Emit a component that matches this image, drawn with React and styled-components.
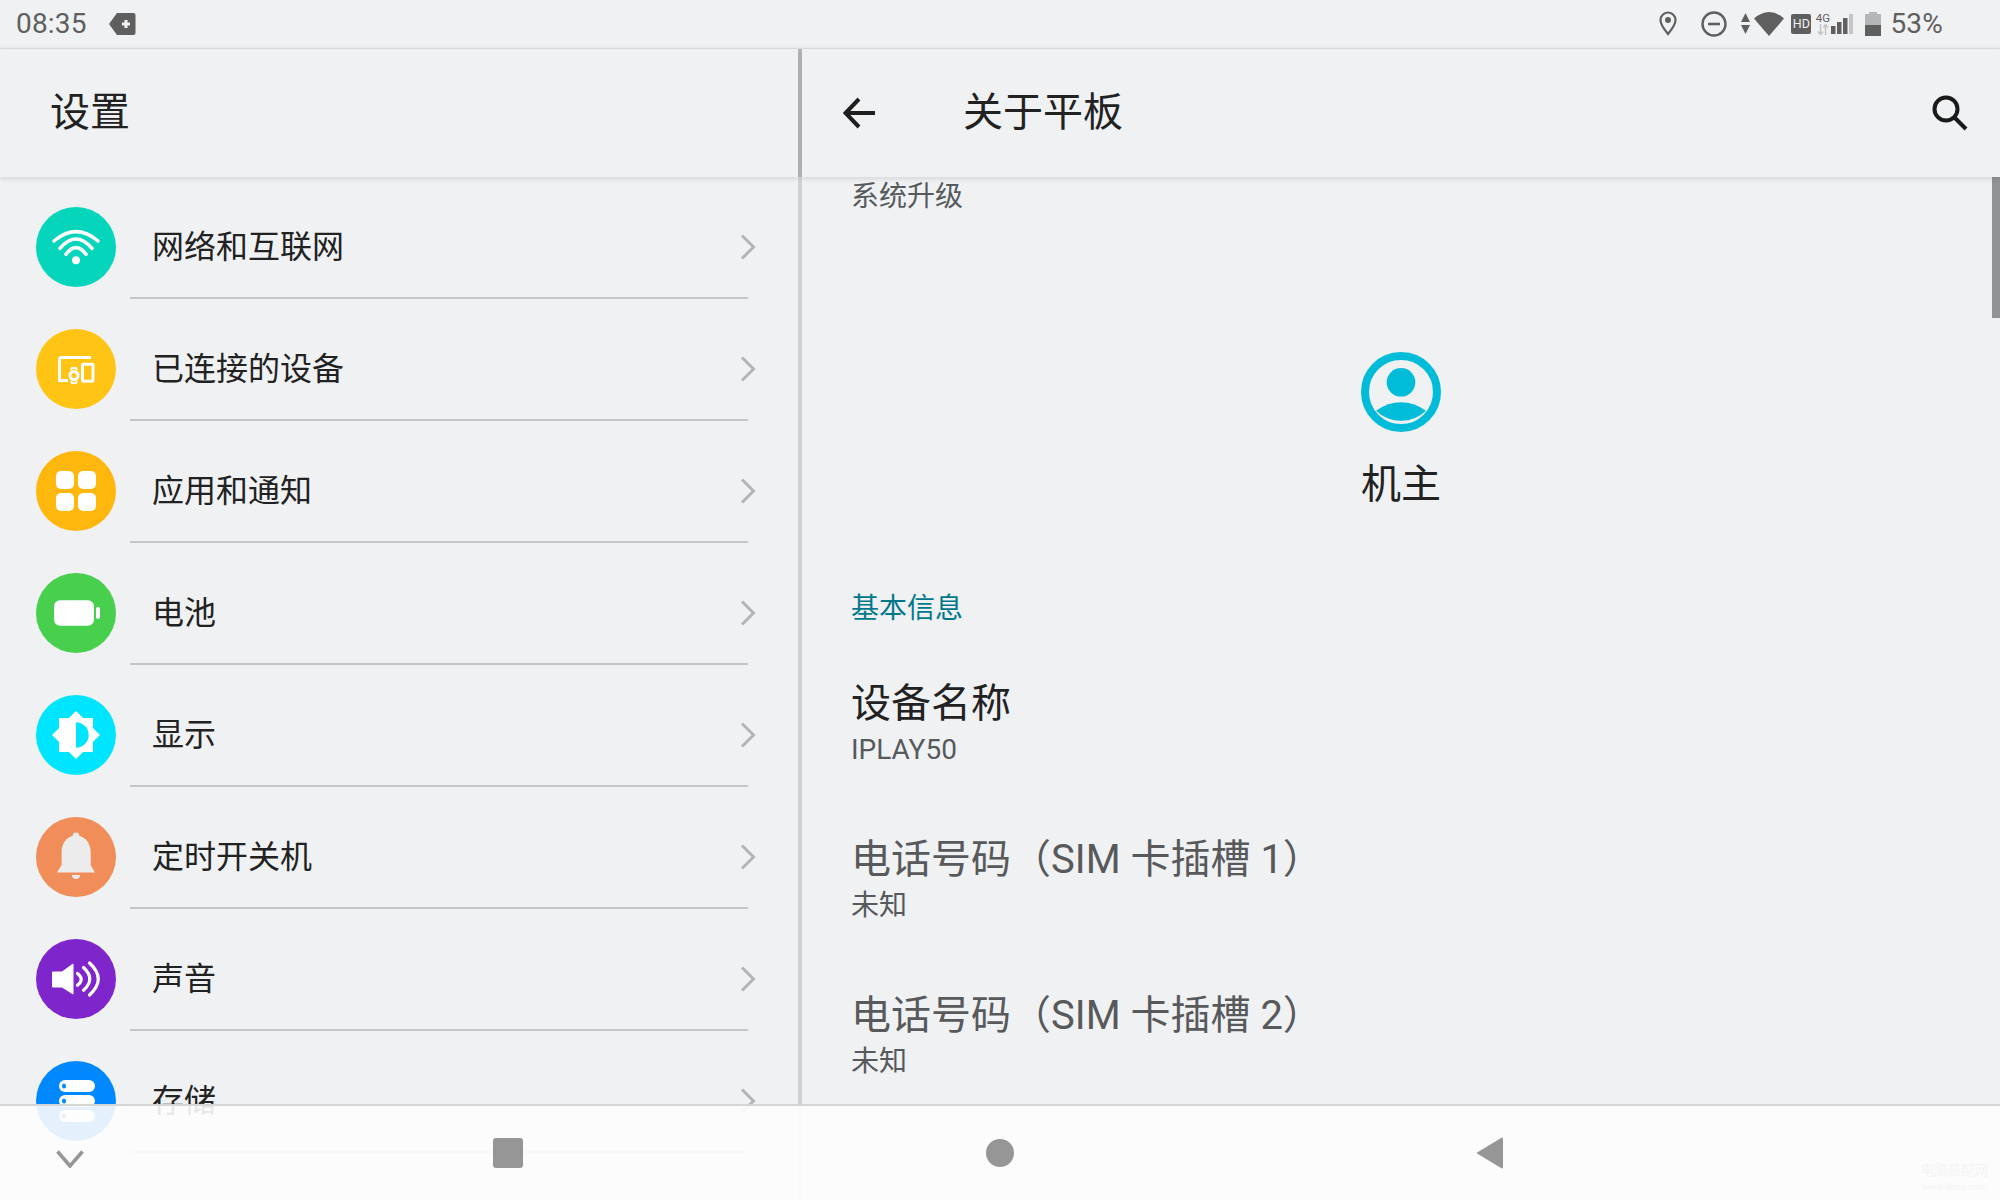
import React from 'react';
import styled, { createGlobalStyle } from 'styled-components';

const FONT = `Roboto, "Noto Sans CJK SC", "Noto Sans", sans-serif`;
const BG = '#f0f1f3';
const GRAY = '#5f5f5f';

const Global = createGlobalStyle`
  html, body { margin: 0; padding: 0; background: ${BG}; }
  * { box-sizing: border-box; }
`;

const Screen = styled.div`
  position: relative;
  width: 2000px;
  height: 1200px;
  overflow: hidden;
  display: flex;
  flex-direction: column;
  background: ${BG};
  font-family: ${FONT};
  color: #222;
`;

const StatusBar = styled.div`
  flex: 0 0 48px;
  display: flex;
  align-items: center;
  padding: 0 57px 1px 16px;
  border-bottom: 1px solid #dcdde0;
  background: linear-gradient(${BG} 90%, #e9eaec);
`;
const StatusText = styled.span`
  font-size: 28px;
  line-height: 47px;
  color: ${GRAY};
  margin-left: ${p => p.$ml || 0}px;
  letter-spacing: 0.2px;
`;
const Spacer = styled.div`
  flex: 1;
`;
const Glyph = styled.svg`
  flex: none;
  display: block;
  margin-left: ${p => p.$ml || 0}px;
`;
const HdBadge = styled.span`
  flex: none;
  width: 20px;
  height: 20px;
  margin-left: 7px;
  border-radius: 2px;
  background: ${GRAY};
  color: #f0f1f3;
  font-size: 12.5px;
  line-height: 20px;
  text-align: center;
`;
const NetType = styled.span`
  flex: none;
  width: 15px;
  height: 24px;
  margin-left: 4px;
  display: flex;
  flex-direction: column;
  align-items: center;
  font-size: 11.5px;
  line-height: 12px;
  color: ${GRAY};
`;

const Main = styled.div`
  flex: 1;
  min-height: 0;
  display: flex;
`;
const Pane = styled.section`
  position: relative;
  min-width: 0;
  display: flex;
  flex-direction: column;
  flex: ${p => (p.$side === 'left' ? '0 0 798px' : '1')};
`;
const PaneDivider = styled.div`
  flex: 0 0 4px;
  background: linear-gradient(#b9babc 128px, #d0d1d3 128px);
`;
const Header = styled.header`
  position: relative;
  z-index: 1;
  flex: 0 0 128px;
  display: flex;
  align-items: center;
  padding: 0 32px 0 ${p => p.$pad}px;
  background: ${BG};
  box-shadow: 0 2px 5px rgba(0, 0, 0, 0.11);
`;
const HeaderTitle = styled.h1`
  margin: 0 0 0 ${p => p.$ml || 0}px;
  flex: 1;
  font-size: 40px;
  line-height: 56px;
  font-weight: 400;
  color: #222;
`;

const SettingsList = styled.div`
  flex: 1;
  min-height: 0;
  overflow: hidden;
`;
const Row = styled.div`
  height: 122px;
  padding: 20px 42px 2px 36px;
  display: flex;
  align-items: center;
  background: linear-gradient(#c5c6c8, #c5c6c8) no-repeat 130px bottom / 618px 2px;
`;
const IconDisc = styled.div`
  flex: 0 0 80px;
  height: 80px;
  border-radius: 50%;
  background: ${p => p.$color};
`;
const DiscArt = styled.svg`
  display: block;
  width: 80px;
  height: 80px;
`;
const RowLabel = styled.span`
  flex: 1;
  margin-left: 36px;
  font-size: 32px;
  line-height: 44px;
  color: #222;
`;

const Detail = styled.div`
  flex: 1;
  min-height: 0;
  overflow: hidden;
  padding-left: 49px;
`;
const Caption = styled.div`
  font-size: 28px;
  line-height: 40px;
  color: ${p => p.$color || '#565a5c'};
  margin-top: ${p => p.$mt || 0}px;
`;
const Owner = styled.div`
  margin: 135px 49px 0 0;
  display: flex;
  flex-direction: column;
  align-items: center;
`;
const OwnerName = styled.div`
  margin-top: 25px;
  font-size: 40px;
  line-height: 56px;
  color: #222;
`;
const Pref = styled.div`
  height: 92px;
  margin-top: ${p => p.$mt}px;
`;
const PrefTitle = styled.div`
  font-size: 40px;
  line-height: 56px;
  color: ${p => (p.$muted ? '#58595b' : '#222')};
`;
const PrefValue = styled.div`
  font-size: 28px;
  line-height: 36px;
  color: #565a5c;
`;
const ScrollThumb = styled.div`
  position: absolute;
  top: 23px;
  right: 0;
  width: 8px;
  height: 246px;
  background: #909497;
`;

const NavBar = styled.nav`
  position: absolute;
  left: 0;
  right: 0;
  bottom: 0;
  z-index: 2;
  height: 96px;
  display: grid;
  grid-template-columns: 493px 30px 1fr 28px 1fr 28px 496px;
  align-items: center;
  border-top: 2px solid #d4d5d7;
  background: rgba(253, 253, 253, 0.9);
`;
const NavSquare = styled.div`
  grid-column: 2;
  width: 30px;
  height: 30px;
  border-radius: 3px;
  background: #969696;
`;
const NavCircle = styled.div`
  grid-column: 4;
  width: 28px;
  height: 28px;
  border-radius: 50%;
  background: #969696;
`;
const Watermark = styled.div`
  position: absolute;
  right: 11px;
  bottom: 7px;
  width: 69px;
  text-align: center;
  color: #f4f4f4;
  font-size: 13.5px;
  line-height: 17px;
`;
const WatermarkUrl = styled.div`
  font-size: 9.5px;
  line-height: 12px;
  margin-top: 2px;
`;

const W = '#fff';
const lineProps = { fill: 'none', stroke: W, strokeLinecap: 'round', strokeLinejoin: 'round' };

const Art = {
  wifi: (
    <g {...lineProps} strokeWidth="3.6">
      <path d="M18 34Q40 15.4 62 34" />
      <path d="M24 41.3Q40 22.7 56 41.3" />
      <path d="M30 47.3Q40 34 50 47.3" />
      <circle cx="40" cy="53.3" r="4" fill={W} stroke="none" />
    </g>
  ),
  devices: (
    <g fill="none" stroke={W} strokeWidth="3">
      <path d="M55 28.5H25.5a2 2 0 0 0-2 2V51.5H32" />
      <circle cx="38" cy="46.5" r="4" />
      <path d="M35 41l1-2h4l1 2M35 52l1 2h4l1-2" strokeWidth="2" />
      <rect x="46.500" y="35.200" width="10.500" height="17" rx="1" />
    </g>
  ),
  apps: (
    <g fill={W}>
      <rect x="20" y="20" width="18" height="18" rx="5" />
      <rect x="42" y="20" width="18" height="18" rx="5" />
      <rect x="20" y="42" width="18" height="18" rx="5" />
      <rect x="42" y="42" width="18" height="18" rx="5" />
    </g>
  ),
  battery: (
    <g fill={W}>
      <rect x="18" y="27.300" width="40" height="25.400" rx="6" />
      <rect x="60" y="34" width="4" height="12" rx="2" />
    </g>
  ),
  display: (
    <path
      transform="translate(40 40) scale(2.12) translate(-12 -12)"
      fill={W}
      fillRule="evenodd"
      d="M20 8.69V4h-4.690L12 .69 8.690 4H4v4.690L.69 12 4 15.310V20h4.690L12 23.310 15.310 20H20v-4.690L23.310 12 20 8.690zM12 18V6c3.310 0 6 2.690 6 6s-2.690 6-6 6z"
    />
  ),
  bell: (
    <g fill="#ececec">
      <path d="M40 15.500a3.200 3.200 0 0 1 3.200 3.200C50 20.500 54.700 27 54.700 35V48L59 55.600H21L25.600 48V35C25.600 27 30 20.500 36.800 18.700A3.200 3.200 0 0 1 40 15.500z" />
      <path d="M36 58h8a4 4 0 0 1-8 0z" />
    </g>
  ),
  sound: (
    <g>
      <path fill={W} stroke={W} strokeWidth="1" strokeLinejoin="round" d="M16.500 33H26L37 25V55L26 48H16.500z" />
      <g {...lineProps} strokeWidth="3.200">
        <path d="M41.500 34.500Q49 40.300 41.500 46.300" />
        <path d="M47.500 28.500Q60 40 47.500 51.300" />
        <path d="M53.500 24Q71 40 53.500 56" />
      </g>
    </g>
  ),
  storage: (
    <g>
      {[19, 34, 49].map(y => (
        <g key={y}>
          <rect x="23" y={y} width="36" height="12" rx="6" fill={W} />
          <ellipse cx="28" cy={y + 6} rx="2" ry="2.500" fill="#0088ff" />
        </g>
      ))}
    </g>
  ),
};

const rows = [
  { label: '网络和互联网', color: '#05d6bb', art: 'wifi' },
  { label: '已连接的设备', color: '#ffc414', art: 'devices' },
  { label: '应用和通知', color: '#ffb70d', art: 'apps' },
  { label: '电池', color: '#48cf4e', art: 'battery' },
  { label: '显示', color: '#00e5ff', art: 'display' },
  { label: '定时开关机', color: '#f08d58', art: 'bell' },
  { label: '声音', color: '#7e26cc', art: 'sound' },
  { label: '存储', color: '#0088ff', art: 'storage' },
];

const Chevron = () => (
  <Glyph width="16" height="26" viewBox="0 0 16 26">
    <path d="M2 1.500L13.500 13L2 24.500" fill="none" stroke="#b4b5b7" strokeWidth="3" />
  </Glyph>
);

export default function App() {
  return (
    <Screen>
      <Global />
      <StatusBar>
        <StatusText>08:35</StatusText>
        <Glyph $ml={22} width="27" height="22" viewBox="0 0 27 22">
          <path d="M8 0H24.500a2 2 0 0 1 2 2V20a2 2 0 0 1-2 2H8L0 11z" fill={GRAY} />
          <path d="M13 11h8M17 7v8" stroke="#f0f1f3" strokeWidth="3" />
        </Glyph>
        <Spacer />
        <Glyph width="18" height="25" viewBox="0 0 18 25">
          <path d="M9 1.500a7.500 7.500 0 0 0-7.500 7.500C1.500 14 9 23 9 23s7.500-9 7.500-14A7.500 7.500 0 0 0 9 1.500z" fill="none" stroke={GRAY} strokeWidth="2.200" />
          <circle cx="9" cy="9" r="3" fill={GRAY} />
        </Glyph>
        <Glyph $ml={24} width="26" height="26" viewBox="0 0 26 26">
          <circle cx="13" cy="13" r="11.500" fill="none" stroke={GRAY} strokeWidth="2.400" />
          <path d="M7 13h12" stroke={GRAY} strokeWidth="2.600" />
        </Glyph>
        <Glyph $ml={14} width="9" height="21" viewBox="0 0 9 21">
          <path d="M4.500 0L9 9H0zM0 12H9L4.500 21z" fill={GRAY} />
        </Glyph>
        <Glyph $ml={4} width="30" height="25" viewBox="0 0 30 25">
          <path d="M0 7.500Q15 -5.500 30 7.500L15 25z" fill={GRAY} />
        </Glyph>
        <HdBadge>HD</HdBadge>
        <NetType>
          4G
          <Glyph width="12" height="11" viewBox="0 0 12 11">
            <path d="M3.500 0v10M1 7.500l2.500 3 2.500-3M8.500 11V1M6.500 3.500L8.500 .5l2.500 3" fill="none" stroke="#c4c5c7" strokeWidth="1.600" />
          </Glyph>
        </NetType>
        <Glyph $ml={1} width="22" height="20" viewBox="0 0 22 20">
          <rect x="0" y="12" width="4.500" height="8" fill={GRAY} />
          <rect x="6" y="8" width="4.500" height="12" fill={GRAY} />
          <rect x="12" y="4" width="4.500" height="16" fill={GRAY} />
          <rect x="18" y="0" width="4" height="20" fill="#c4c5c7" />
        </Glyph>
        <Glyph $ml={12} width="16" height="24" viewBox="0 0 16 24">
          <path d="M4 0H12V2H16V13H0V2H4z" fill="#b5b6b8" />
          <rect x="0" y="13" width="16" height="11" fill={GRAY} />
        </Glyph>
        <StatusText $ml={9}>53%</StatusText>
      </StatusBar>

      <Main>
        <Pane $side="left">
          <Header $pad={50}>
            <HeaderTitle>设置</HeaderTitle>
          </Header>
          <SettingsList>
            {rows.map(r => (
              <Row key={r.label}>
                <IconDisc $color={r.color}>
                  <DiscArt viewBox="0 0 80 80">{Art[r.art]}</DiscArt>
                </IconDisc>
                <RowLabel>{r.label}</RowLabel>
                <Chevron />
              </Row>
            ))}
          </SettingsList>
        </Pane>
        <PaneDivider />
        <Pane $side="right">
          <Header $pad={41}>
            <Glyph width="32" height="32" viewBox="0 0 32 32">
              <path d="M32 16H3M16 2L2.500 16L16 30" fill="none" stroke="#1f1f1f" strokeWidth="4" />
            </Glyph>
            <HeaderTitle $ml={88}>关于平板</HeaderTitle>
            <Glyph width="36" height="36" viewBox="0 0 36 36">
              <circle cx="14" cy="14" r="11.500" fill="none" stroke="#1a1a1a" strokeWidth="4" />
              <path d="M22 22L34 34" stroke="#1a1a1a" strokeWidth="4" />
            </Glyph>
          </Header>
          <Detail>
            <Caption>系统升级</Caption>
            <Owner>
              <Glyph width="80" height="80" viewBox="0 0 80 80">
                <circle cx="40" cy="40" r="36" fill="none" stroke="#00bcd9" strokeWidth="8" />
                <circle cx="40" cy="30.300" r="14.300" fill="#00bcd9" />
                <path d="M15 58.700Q40 42 65 58.700A36 36 0 0 1 15 58.700z" fill="#00bcd9" />
              </Glyph>
              <OwnerName>机主</OwnerName>
            </Owner>
            <Caption $mt={76} $color="#00788c">基本信息</Caption>
            <Pref $mt={47}>
              <PrefTitle>设备名称</PrefTitle>
              <PrefValue>IPLAY50</PrefValue>
            </Pref>
            <Pref $mt={64}>
              <PrefTitle $muted>电话号码（SIM 卡插槽 1）</PrefTitle>
              <PrefValue>未知</PrefValue>
            </Pref>
            <Pref $mt={64}>
              <PrefTitle $muted>电话号码（SIM 卡插槽 2）</PrefTitle>
              <PrefValue>未知</PrefValue>
            </Pref>
          </Detail>
          <ScrollThumb />
        </Pane>
      </Main>

      <NavBar>
        <Glyph $ml={56} width="28" height="18" viewBox="0 0 28 18" style={{ marginTop: 12 }}>
          <path d="M1.500 1.500L14 16L26.500 1.500" fill="none" stroke="#969696" strokeWidth="3.500" />
        </Glyph>
        <NavSquare />
        <NavCircle />
        <Glyph style={{ gridColumn: 6 }} width="28" height="32" viewBox="0 0 28 32">
          <path d="M26 1.500V30.500L2 16z" fill="#969696" stroke="#969696" strokeWidth="2" strokeLinejoin="round" />
        </Glyph>
        <Watermark>
          电脑装配网
          <WatermarkUrl>www.dnzp.com</WatermarkUrl>
        </Watermark>
      </NavBar>
    </Screen>
  );
}
